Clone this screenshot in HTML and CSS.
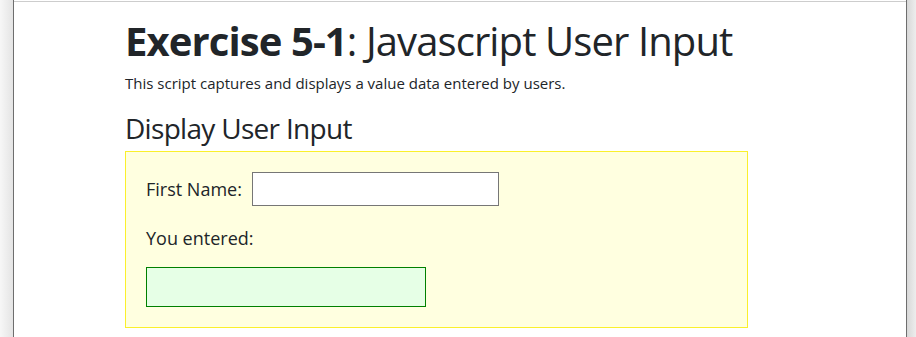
FILE: index.html
```html
<!DOCTYPE html>
<html>
<head>
  <link rel="stylesheet" href="styles.css">
</head>
<body>
  <div class="frame">
    <div class="side side-left"></div>
    <div class="page">
      <div class="content">
        <h1><strong>Exercise 5-1</strong>: Javascript User Input</h1>
        <p class="lead">This script captures and displays a value data entered by users.</p>
        <h3>Display User Input</h3>
        <div class="box">
          <div class="field">
            <label for="firstName">First Name:</label>
            <input type="text" id="firstName" oninput="showValue()">
          </div>
          <p class="result-label">You entered:</p>
          <div id="output" class="output"></div>
        </div>
      </div>
    </div>
    <div class="side side-right"></div>
  </div>
<script>
function showValue() {
  document.getElementById('output').textContent = document.getElementById('firstName').value;
}
</script>
</body>
</html>
```

FILE: styles.css
```css
html, body { margin: 0; height: 100%; }
body { font-family: "Open Sans", "Liberation Sans", sans-serif; color: #212529; background: #fff; overflow: hidden; }

.frame { display: flex; height: 100%; }
.side { flex: none; }
.side-left { width: 13px; background: linear-gradient(to right, #f7f7f7, #e4e4e4); border-right: 1px solid #6e6e6e; }
.side-right { width: 9px; background: linear-gradient(to right, #d8d8d8, #ededed); border-left: 1px solid #6e6e6e; }
.page { flex: 1; padding-top: 1px; background: #fff; }
.content { border-top: 1px solid #cdcdcd; padding: 15px 0 0 111px; }

h1 { font-size: 40px; font-weight: 400; line-height: 48px; letter-spacing: -0.9px; margin: 0 0 6px; }
h1 strong { font-weight: 700; }
.lead { font-size: 15px; line-height: 24px; margin: 0 0 16px; }
h3 { font-size: 28px; font-weight: 400; line-height: 34px; letter-spacing: -0.7px; margin: 0 0 6px; }

.box { width: 581px; padding: 20px; background: #ffffe0; border: 1px solid #faf02c; }
.field { display: flex; align-items: center; gap: 10px; margin-bottom: 18px; }
.field label { font-size: 18px; }
.field input { box-sizing: border-box; width: 247px; height: 34px; padding: 0 4px; border: 1px solid #767676; border-radius: 0; font: inherit; }
.result-label { font-size: 18px; line-height: 28px; margin: 0 0 15px; }
.output { width: 278px; height: 38px; background: #e6ffe6; border: 1px solid #008000; }
```
